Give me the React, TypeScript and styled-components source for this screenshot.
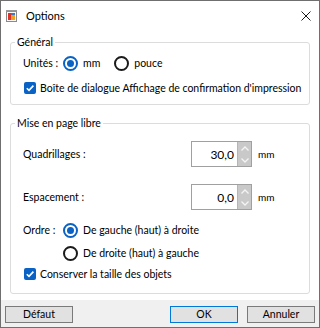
import React from "react";
import styled, { createGlobalStyle } from "styled-components";

const Global = createGlobalStyle`
  html, body { margin: 0; padding: 0; background: #ffffff; }
  body { font-family: Lato, "Noto Sans", sans-serif; font-size: 10.5px; color: #000; }
  * { box-sizing: border-box; }
`;

const Window = styled.div`
  width: 320px;
  height: 328px;
  border: 1px solid #6f6f6f;
  background: #ffffff;
  display: flex;
  flex-direction: column;
  overflow: hidden;
`;

const TitleBar = styled.div`
  height: 29px;
  display: flex;
  align-items: center;
  padding: 0 8px 0 5px;
  gap: 8px;
  flex-shrink: 0;
`;

const Title = styled.div`
  flex: 1;
  font-size: 11px;
  color: #000;
`;

const Body = styled.div`
  flex: 1;
  display: flex;
  flex-direction: column;
  gap: 10px;
  padding: 4px 9px 0 9px;
`;

const Group = styled.fieldset`
  margin: 0;
  padding: 0;
  border: 1px solid #dcdcdc;
  border-radius: 3px;
  min-width: 0;
`;

const Legend = styled.legend`
  margin-left: 4px;
  padding: 0 2px;
  line-height: 16px;
  font-size: 10.5px;
`;

const GroupContent = styled.div<{ $pt: number; $pb: number }>`
  display: flex;
  flex-direction: column;
  padding: ${(p) => p.$pt}px 12px ${(p) => p.$pb}px 12px;
`;

const Row = styled.div<{ $mt?: number }>`
  display: grid;
  grid-template-columns: 40px 1fr;
  align-items: center;
  min-height: 16px;
  margin-top: ${(p) => p.$mt ?? 0}px;
`;

const SpinRow = styled.div<{ $mt?: number }>`
  display: grid;
  grid-template-columns: 168px auto auto;
  justify-content: start;
  align-items: center;
  margin-top: ${(p) => p.$mt ?? 0}px;
`;

const Inline = styled.div`
  display: flex;
  align-items: center;
`;

const RadioCircle = styled.span<{ $checked?: boolean }>`
  width: 15px;
  height: 15px;
  border-radius: 50%;
  border: 2px solid ${(p) => (p.$checked ? "#0a63c4" : "#1b1b1b")};
  display: inline-flex;
  align-items: center;
  justify-content: center;
  flex-shrink: 0;
  background: #fff;
  &::after {
    content: "";
    display: ${(p) => (p.$checked ? "block" : "none")};
    width: 7px;
    height: 7px;
    border-radius: 50%;
    background: #0a63c4;
  }
`;

const RadioLabel = styled.span`
  margin-left: 5px;
  margin-right: 14px;
`;

const CheckRow = styled.div<{ $mt?: number }>`
  display: flex;
  align-items: center;
  min-height: 16px;
  margin-left: 1px;
  margin-top: ${(p) => p.$mt ?? 0}px;
  white-space: nowrap;
`;

const CheckBox = styled.span`
  width: 12px;
  height: 12px;
  border-radius: 2px;
  background: #0a63c4;
  display: inline-flex;
  align-items: center;
  justify-content: center;
  flex-shrink: 0;
  margin-right: 4px;
`;

const SpinBox = styled.div`
  display: flex;
  height: 26px;
  border: 1px solid #a0a0a0;
  background: #fff;
`;

const SpinInput = styled.div`
  width: 45px;
  display: flex;
  align-items: center;
  justify-content: flex-end;
  padding-right: 3px;
  font-size: 12px;
`;

const SpinButtons = styled.div`
  width: 14px;
  display: flex;
  flex-direction: column;
  background: #c9c9c9;
  border-left: 1px solid #b5b5b5;
`;

const SpinHalf = styled.div`
  flex: 1;
  display: flex;
  align-items: center;
  justify-content: center;
`;

const Unit = styled.span`
  margin-left: 6px;
  font-size: 10px;
`;

const Footer = styled.div`
  height: 27px;
  background: #f0f0f0;
  display: flex;
  align-items: flex-start;
  padding: 6px 4px 0 4px;
  flex-shrink: 0;
`;

const Button = styled.button<{ $variant?: "default" | "primary" }>`
  width: 68px;
  height: 17px;
  padding: 0;
  font-family: inherit;
  font-size: 10.5px;
  color: #000;
  background: #e1e1e1;
  border: 1px solid ${(p) => (p.$variant === "primary" ? "#0078d7" : "#7a7a7a")};
  line-height: 15px;
`;

const Spacer = styled.div`
  flex: 1;
`;

const ButtonGap = styled.div`
  width: 9px;
`;

const AppIcon = () => (
  <svg width="12" height="12" viewBox="0 0 12 12">
    <rect x="0.5" y="1.5" width="10" height="10" fill="#fafafa" stroke="#8a8a8a" />
    <rect x="2" y="3" width="3" height="7" fill="#d9332b" />
    <rect x="5" y="5" width="4" height="5" fill="#f1a020" />
    <rect x="5" y="3" width="4" height="2" fill="#3a78c8" />
    <rect x="0" y="0" width="11" height="1.5" fill="#9a9a9a" />
  </svg>
);

const CloseIcon = () => (
  <svg width="10" height="10" viewBox="0 0 10 10">
    <path d="M0.5 0.5 L9.5 9.5 M9.5 0.5 L0.5 9.5" stroke="#1a1a1a" strokeWidth="1" />
  </svg>
);

const Check = () => (
  <svg width="10" height="10" viewBox="0 0 10 10">
    <path d="M1.8 5.2 L4 7.4 L8.4 2.6" stroke="#fff" strokeWidth="1.6" fill="none" />
  </svg>
);

const Spin = ({ value }: { value: string }) => (
  <Inline>
    <SpinBox>
      <SpinInput>{value}</SpinInput>
      <SpinButtons>
        <SpinHalf>
          <svg width="8" height="5" viewBox="0 0 8 5">
            <path d="M0.5 4.5 L4 1 L7.5 4.5" stroke="#f4f4f4" strokeWidth="1.3" fill="none" />
          </svg>
        </SpinHalf>
        <SpinHalf>
          <svg width="8" height="5" viewBox="0 0 8 5">
            <path d="M0.5 0.5 L4 4 L7.5 0.5" stroke="#f4f4f4" strokeWidth="1.3" fill="none" />
          </svg>
        </SpinHalf>
      </SpinButtons>
    </SpinBox>
    <Unit>mm</Unit>
  </Inline>
);

export default function App() {
  return (
    <>
      <Global />
      <Window>
        <TitleBar>
          <AppIcon />
          <Title>Options</Title>
          <CloseIcon />
        </TitleBar>
        <Body>
          <Group>
            <Legend>Général</Legend>
            <GroupContent $pt={5} $pb={8}>
              <Row>
                <span>Unités :</span>
                <Inline>
                  <RadioCircle $checked />
                  <RadioLabel>mm</RadioLabel>
                  <RadioCircle />
                  <RadioLabel>pouce</RadioLabel>
                </Inline>
              </Row>
              <CheckRow $mt={9}>
                <CheckBox>
                  <Check />
                </CheckBox>
                <span>Boîte de dialogue Affichage de confirmation d'impression</span>
              </CheckRow>
            </GroupContent>
          </Group>
          <Group>
            <Legend>Mise en page libre</Legend>
            <GroupContent $pt={10} $pb={11}>
              <SpinRow>
                <span>Quadrillages :</span>
                <Spin value="30,0" />
              </SpinRow>
              <SpinRow $mt={17}>
                <span>Espacement :</span>
                <Spin value="0,0" />
              </SpinRow>
              <Row $mt={12}>
                <span>Ordre :</span>
                <Inline>
                  <RadioCircle $checked />
                  <RadioLabel>De gauche (haut) à droite</RadioLabel>
                </Inline>
              </Row>
              <Row $mt={7}>
                <span />
                <Inline>
                  <RadioCircle />
                  <RadioLabel>De droite (haut) à gauche</RadioLabel>
                </Inline>
              </Row>
              <CheckRow $mt={5}>
                <CheckBox>
                  <Check />
                </CheckBox>
                <span>Conserver la taille des objets</span>
              </CheckRow>
            </GroupContent>
          </Group>
        </Body>
        <Footer>
          <Button>Défaut</Button>
          <Spacer />
          <Button $variant="primary">OK</Button>
          <ButtonGap />
          <Button>Annuler</Button>
        </Footer>
      </Window>
    </>
  );
}
